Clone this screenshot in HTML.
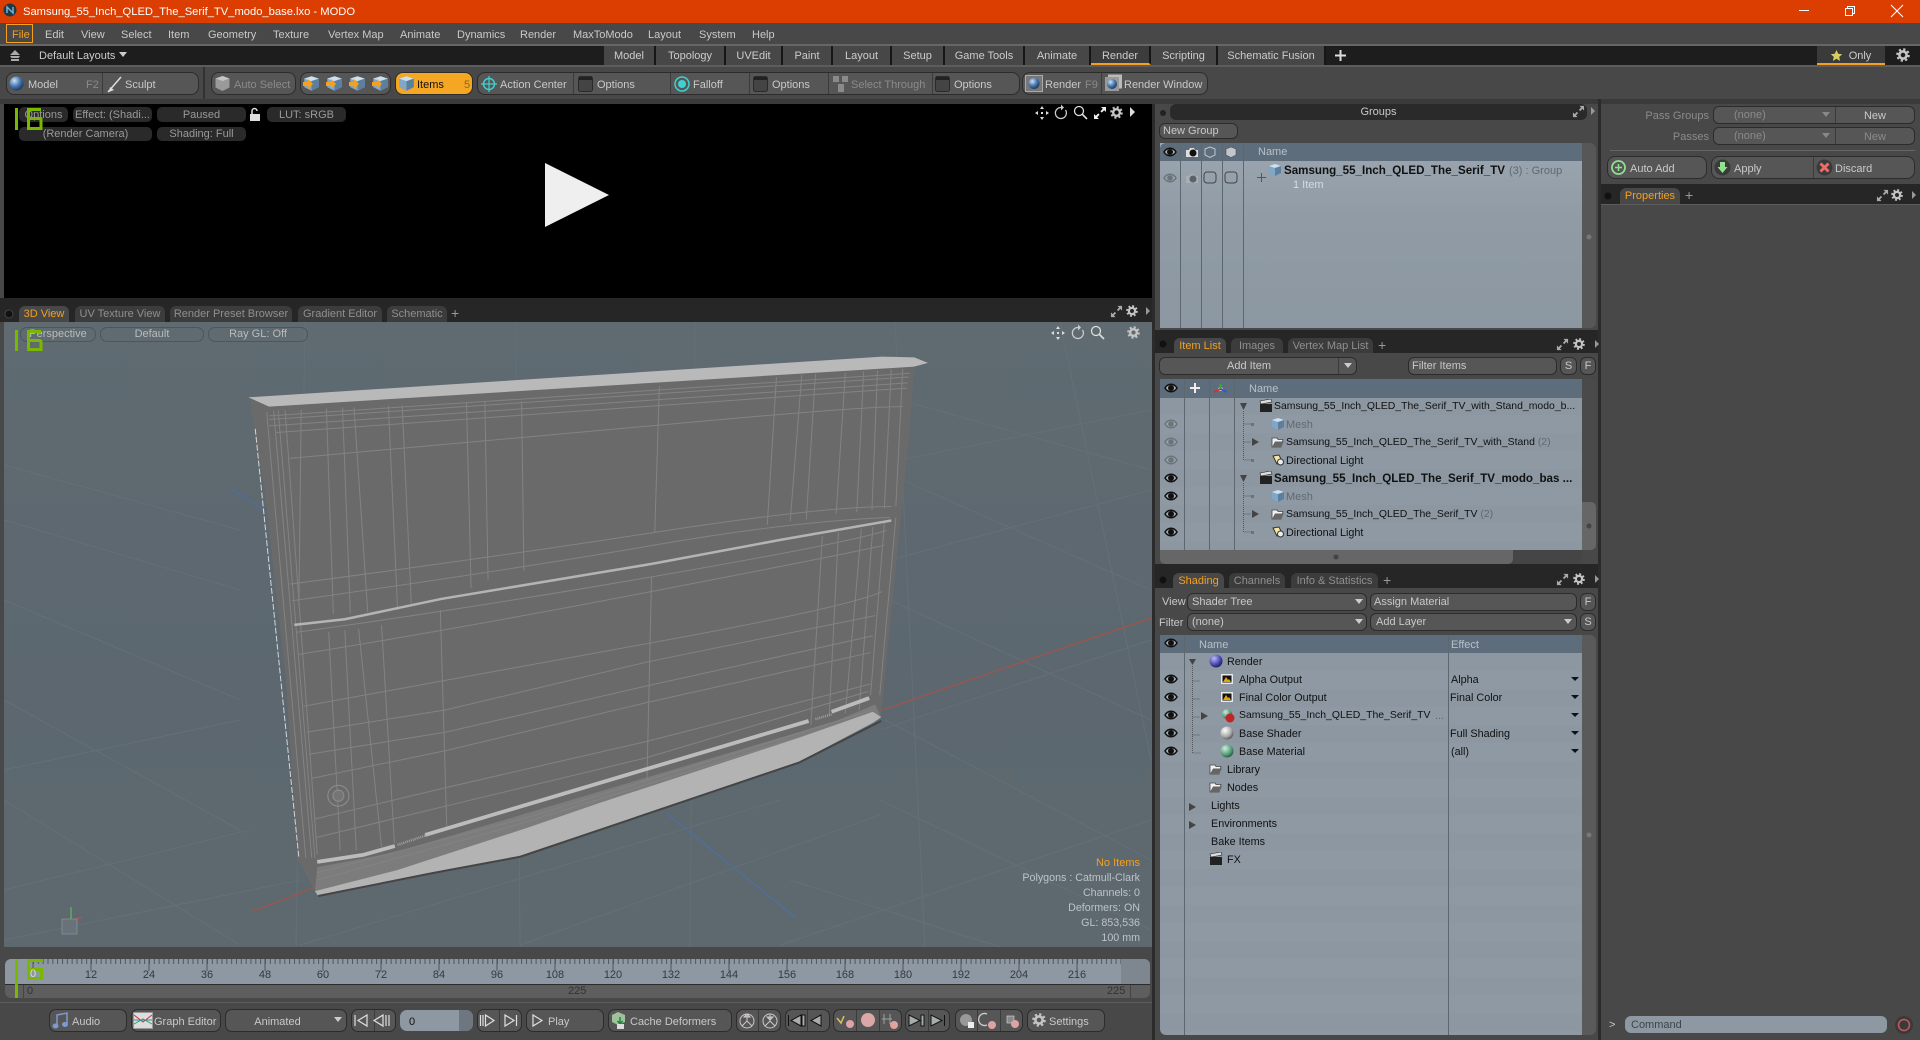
<!DOCTYPE html>
<html><head><meta charset="utf-8"><title>MODO</title>
<style>
html,body{margin:0;padding:0;width:1920px;height:1040px;overflow:hidden;background:#484848}
body{position:relative;font:11px/14px "Liberation Sans",sans-serif;color:#c9c9c9}
div,svg{position:absolute}
svg{overflow:visible}
.t{white-space:nowrap;padding-top:1px;box-sizing:border-box}
.c{text-align:center}
.r{text-align:right}
.d{color:#111;font-size:10.8px}
.n{font-size:10.45px}
.k{font-weight:bold;font-size:11.6px}
.g{color:#8b8b8b}
.o{color:#f5a020}
.m{color:#5f6973}
.b{background:#565656;border:1px solid #2c2c2c;border-radius:6px;box-sizing:border-box}
.p{background:#2a2a2a;border-radius:5px;box-sizing:border-box;color:#999;text-align:center}
.v{border:1px solid #4c565c;border-radius:7px;box-sizing:border-box;color:#bbb;text-align:center;line-height:12px;padding-top:0}
.tab{background:#3c3c3c;border-radius:6px 6px 0 0;color:#8f8f8f;text-align:center;box-sizing:border-box}
.on{background:#484848;color:#f5a020}
.lt{background:#474747;color:#ccc;text-align:center;line-height:19px;top:46px;height:19px;border-right:2px solid #161616;box-sizing:border-box;padding-top:1px}
.s{background:#2a2a2a}
.hd{background:#5e6d7c;color:#b7c0c8}
.ln{background:#5d6770;width:1px}
.dl{background:#3b3b3b;width:1px}
.h{font-size:10.7px;color:#bcc3c8}
</style></head><body>
<svg width="0" height="0" style="left:0;top:0">
<defs>
<symbol id="eye" viewBox="0 0 14 12"><path d="M1 6C4 1 10 1 13 6C10 11 4 11 1 6Z" fill="#aab0b5" stroke="#111" stroke-width="1.500"/><circle cx="7" cy="6" r="3" fill="#111"/></symbol>
<symbol id="eyeg" viewBox="0 0 14 12"><path d="M1 6C4 1 10 1 13 6C10 11 4 11 1 6Z" fill="#9ba3a9" stroke="#6c747b" stroke-width="1.400"/><circle cx="7" cy="6" r="2.800" fill="#6c747b"/></symbol>
<symbol id="cam" viewBox="0 0 14 12"><path d="M1 4h3l1-2h4l1 2h3v7H1z" fill="#ddd"/><circle cx="8" cy="7" r="3.500" fill="#111"/></symbol>
<symbol id="camg" viewBox="0 0 14 12"><path d="M1 4h3l1-2h4l1 2h3v7H1z" fill="#a8aeb3"/><circle cx="8" cy="7" r="3.500" fill="#59626a"/></symbol>
<symbol id="gear" viewBox="0 0 14 14"><circle cx="7" cy="7" r="3.600" fill="none" stroke="#c4c4c4" stroke-width="2.600"/><circle cx="7" cy="7" r="5.600" fill="none" stroke="#c4c4c4" stroke-width="2.400" stroke-dasharray="2.200 2.200"/></symbol>
<symbol id="exp" viewBox="0 0 14 14"><path d="M8 1h5v5l-1.800-1.800-2.400 2.400-1.400-1.400 2.400-2.400zM6 13H1V8l1.800 1.800 2.400-2.400 1.400 1.400-2.400 2.400z" fill="#aaa"/></symbol>
<symbol id="cube" viewBox="0 0 14 14"><path d="M7 1l6 2v7l-6 3-6-3V3z" fill="#7fa7c9"/><path d="M1 3l6 2 6-2-6-2z" fill="#cfdfeb"/><path d="M7 5v8l6-3V3z" fill="#5d7f9e"/></symbol>
<symbol id="fold" viewBox="0 0 14 14"><path d="M1 3h5l1 1.500h5L10 12H1z" fill="#f2f2f2" stroke="#444" stroke-width=".8"/><path d="M4 6.500h9L10 12H1z" fill="#666"/></symbol>
<symbol id="lite" viewBox="0 0 14 14"><path d="M2 3l6-1 3 6-5 3z" fill="#f3e7a5" stroke="#333"/><circle cx="9.500" cy="9" r="3" fill="#eee" stroke="#333"/></symbol>
<symbol id="clap" viewBox="0 0 14 14"><rect x="1" y="5" width="12" height="8" fill="#222"/><path d="M1 2l11-2 1 3-11 2z" fill="#ddd" stroke="#222" stroke-width=".6"/></symbol>
<symbol id="img" viewBox="0 0 14 14"><rect x="1" y="2" width="12" height="10" fill="#e8e8e8"/><rect x="2.500" y="3.500" width="9" height="7" fill="#111"/><path d="M3 10l3-5 2 3 1-1 2 3z" fill="#e0a800"/></symbol>
<radialGradient id="bs" cx=".35" cy=".3" r=".8"><stop offset="0" stop-color="#cfe2f5"/><stop offset=".5" stop-color="#4a7bb0"/><stop offset="1" stop-color="#13294a"/></radialGradient>
<radialGradient id="ps" cx=".35" cy=".3" r=".8"><stop offset="0" stop-color="#b9b9f0"/><stop offset=".6" stop-color="#4848b0"/><stop offset="1" stop-color="#14144a"/></radialGradient>
<radialGradient id="ws" cx=".35" cy=".3" r=".8"><stop offset="0" stop-color="#fff"/><stop offset=".6" stop-color="#aaa"/><stop offset="1" stop-color="#444"/></radialGradient>
<radialGradient id="gs" cx=".35" cy=".3" r=".8"><stop offset="0" stop-color="#cfeedd"/><stop offset=".6" stop-color="#55a07a"/><stop offset="1" stop-color="#1d4a33"/></radialGradient>
<pattern id="tk" x="33" y="0" width="4.833" height="40" patternUnits="userSpaceOnUse"><rect width="1" height="5" fill="#4f565d"/></pattern>
</defs></svg>

<!-- title -->
<div style="left:0;top:0;width:1920px;height:23px;background:#dc3d00"></div>
<svg style="left:3px;top:3px" width="14" height="14"><circle cx="7" cy="7" r="6.500" fill="#1e3a4a"/><path d="M4 10V4l6 6V4" fill="none" stroke="#6fb6d0" stroke-width="1.500"/></svg>
<div class="t" style="left:23px;top:4px;font-size:11.200px;color:#fff">Samsung_55_Inch_QLED_The_Serif_TV_modo_base.lxo - MODO</div>
<svg style="left:1795px;top:0" width="120" height="23"><path d="M4 10.500h10" stroke="#fff"/><path d="M50.500 8.500h7v7h-7zM52.500 8V6.500h7v7H58" fill="none" stroke="#fff"/><path d="M96 5l12 12M108 5L96 17" stroke="#fff" stroke-width="1.100"/></svg>

<!-- menu -->
<div style="left:0;top:44px;width:1920px;height:2px;background:#666"></div>
<div style="left:6px;top:24px;width:27px;height:19px;border:1px solid #f5a020;box-sizing:border-box"></div>
<div class="t o" style="left:12px;top:27px">File</div>
<div class="t" style="left:45px;top:27px">Edit</div>
<div class="t" style="left:81px;top:27px">View</div>
<div class="t" style="left:121px;top:27px">Select</div>
<div class="t" style="left:168px;top:27px">Item</div>
<div class="t" style="left:208px;top:27px">Geometry</div>
<div class="t" style="left:273px;top:27px">Texture</div>
<div class="t" style="left:328px;top:27px">Vertex Map</div>
<div class="t" style="left:400px;top:27px">Animate</div>
<div class="t" style="left:457px;top:27px">Dynamics</div>
<div class="t" style="left:520px;top:27px">Render</div>
<div class="t" style="left:573px;top:27px">MaxToModo</div>
<div class="t" style="left:648px;top:27px">Layout</div>
<div class="t" style="left:699px;top:27px">System</div>
<div class="t" style="left:752px;top:27px">Help</div>

<!-- layout tabs -->
<div style="left:0;top:46px;width:1920px;height:19px;background:#1d1d1d"></div>
<svg style="left:8px;top:48px" width="14" height="14"><path d="M7 2l5 5H2zM2 8h10l-1.500 2h-7zM3 11h8v2H3z" fill="#aaa"/></svg>
<div class="t" style="left:39px;top:48px;color:#ccc">Default Layouts</div>
<svg style="left:119px;top:52px" width="8" height="6"><path d="M0 0h8L4 5z" fill="#ccc"/></svg>
<div class="lt" style="left:604px;width:52px">Model</div>
<div class="lt" style="left:656px;width:70px">Topology</div>
<div class="lt" style="left:726px;width:57px">UVEdit</div>
<div class="lt" style="left:783px;width:50px">Paint</div>
<div class="lt" style="left:833px;width:59px">Layout</div>
<div class="lt" style="left:892px;width:53px">Setup</div>
<div class="lt" style="left:945px;width:80px">Game Tools</div>
<div class="lt" style="left:1025px;width:66px">Animate</div>
<div class="lt" style="left:1091px;width:60px;background:#3c3c3c;border-bottom:2px solid #f5a020">Render</div>
<div class="lt" style="left:1151px;width:67px">Scripting</div>
<div class="lt" style="left:1218px;width:108px">Schematic Fusion</div>
<svg style="left:1334px;top:49px" width="13" height="13"><path d="M6.500 1v11M1 6.500h11" stroke="#ddd" stroke-width="2"/></svg>
<div class="lt" style="left:1817px;width:68px;background:#3a3a3a;border-bottom:2px solid #f5a020;border-right:0;text-indent:18px">Only</div>
<svg style="left:1830px;top:49px" width="13" height="13"><path d="M6.500 1l1.700 3.800 4 .4-3 2.700.9 4.100-3.600-2.200L2.900 12l.9-4.100-3-2.700 4-.4z" fill="#d9cf60"/></svg>
<svg style="left:1896px;top:48px" width="14" height="14"><use href="#gear" width="14" height="14"/></svg>

<!-- toolbar -->
<div style="left:0;top:65px;width:1920px;height:2px;background:#5c5c5c"></div>
<div style="left:0;top:99px;width:1920px;height:5px;background:#3a3a3a"></div>
<div style="left:203px;top:67px;width:2px;height:32px;background:#333"></div>

<div class="b" style="left:6px;top:72px;width:193px;height:23px;border-radius:8px"></div>
<div class="dl" style="left:102px;top:73px;height:21px"></div>
<svg style="left:9px;top:76px" width="15" height="15"><circle cx="7.500" cy="7.500" r="7" fill="url(#bs)"/></svg>
<div class="t" style="left:28px;top:77px">Model</div>
<div class="t g" style="left:86px;top:77px">F2</div>
<svg style="left:106px;top:74px" width="18" height="20"><path d="M2 18L15 3" stroke="#ddd" stroke-width="1.500"/><path d="M4 13l4 3-5 2z" fill="#ddd"/></svg>
<div class="t" style="left:125px;top:77px">Sculpt</div>

<div class="b" style="left:211px;top:72px;width:85px;height:23px;border-radius:8px"></div>
<svg style="left:214px;top:75px" width="17" height="17"><path d="M8.500 1l7 2.500v9l-7 3.500-7-3.500v-9z" fill="#9a9a9a"/><path d="M1.500 3.500l7 2.500 7-2.500-7-2.500z" fill="#c4c4c4"/></svg>
<div class="t g" style="left:234px;top:77px">Auto Select</div>

<div class="b" style="left:300px;top:72px;width:91px;height:23px;border-radius:8px"></div>
<svg style="left:302px;top:75px" width="88" height="18"><use href="#cube" x="1" width="17" height="17"/><path d="M1 7h5V4l5 5-5 5v-3H1z" fill="#f5a020"/><use href="#cube" x="24" width="17" height="17"/><path d="M24 7h5V4l5 5-5 5v-3h-5z" fill="#f5a020"/><use href="#cube" x="47" width="17" height="17"/><path d="M47 7h5V4l5 5-5 5v-3h-5z" fill="#f5a020"/><use href="#cube" x="70" width="17" height="17"/><path d="M70 7h5V4l5 5-5 5v-3h-5z" fill="#f5a020"/></svg>

<div class="b" style="left:395px;top:72px;width:78px;height:23px;border-radius:8px;background:#f5a623"></div>
<svg style="left:398px;top:75px" width="17" height="17"><use href="#cube" width="17" height="17"/></svg>
<div class="t" style="left:417px;top:77px;color:#111">Items</div>
<div class="t" style="left:464px;top:77px;color:#8c6a20">5</div>

<div class="b" style="left:477px;top:72px;width:543px;height:23px;border-radius:8px"></div>
<div class="dl" style="left:573px;top:73px;height:21px"></div><div class="dl" style="left:670px;top:73px;height:21px"></div><div class="dl" style="left:749px;top:73px;height:21px"></div><div class="dl" style="left:828px;top:73px;height:21px"></div><div class="dl" style="left:932px;top:73px;height:21px"></div>
<svg style="left:481px;top:76px" width="16" height="16"><circle cx="8" cy="8" r="5.500" fill="none" stroke="#3fd0d0" stroke-width="1.500"/><path d="M8 0v16M0 8h16" stroke="#3fd0d0" stroke-width="1.200"/></svg>
<div class="t" style="left:500px;top:77px">Action Center</div>
<svg style="left:578px;top:76px" width="15" height="16"><rect x=".5" y=".5" width="14" height="15" rx="2" fill="#444" stroke="#2a2a2a"/><rect x="1" y="1" width="13" height="3" fill="#222"/></svg>
<div class="t" style="left:597px;top:77px">Options</div>
<svg style="left:674px;top:76px" width="16" height="16"><circle cx="8" cy="8" r="7" fill="none" stroke="#3fd0d0" stroke-width="1.500"/><circle cx="8" cy="8" r="4" fill="#3fd0d0"/></svg>
<div class="t" style="left:693px;top:77px">Falloff</div>
<svg style="left:753px;top:76px" width="15" height="16"><rect x=".5" y=".5" width="14" height="15" rx="2" fill="#444" stroke="#2a2a2a"/><rect x="1" y="1" width="13" height="3" fill="#222"/></svg>
<div class="t" style="left:772px;top:77px">Options</div>
<svg style="left:832px;top:75px" width="17" height="18"><path d="M1 1h6v6H1zM10 1h6v6h-6zM6 9h6v8H6z" fill="#8a8a8a"/></svg>
<div class="t g" style="left:851px;top:77px">Select Through</div>
<svg style="left:935px;top:76px" width="15" height="16"><rect x=".5" y=".5" width="14" height="15" rx="2" fill="#444" stroke="#2a2a2a"/><rect x="1" y="1" width="13" height="3" fill="#222"/></svg>
<div class="t" style="left:954px;top:77px">Options</div>

<div class="b" style="left:1022px;top:72px;width:186px;height:23px;border-radius:8px"></div>
<div class="dl" style="left:1101px;top:73px;height:21px"></div>
<svg style="left:1025px;top:75px" width="18" height="17"><rect x=".5" y=".5" width="17" height="16" fill="#777" stroke="#aaa"/><circle cx="9" cy="8.500" r="5.500" fill="url(#bs)"/></svg>
<div class="t" style="left:1045px;top:77px">Render</div>
<div class="t g" style="left:1085px;top:77px">F9</div>
<svg style="left:1103px;top:74px" width="20" height="19"><rect x="5" y=".5" width="14" height="14" fill="#bbb"/><rect x="2" y="3" width="14" height="14" fill="#999"/><circle cx="9" cy="10" r="5" fill="url(#bs)"/></svg>
<div class="t" style="left:1124px;top:77px">Render Window</div>

<!-- render preview -->
<div style="left:4px;top:104px;width:1148px;height:194px;background:#000"></div>
<div class="p t" style="left:19px;top:107px;width:49px;height:15px">Options</div>
<div class="p t" style="left:73px;top:107px;width:79px;height:15px">Effect: (Shadi...</div>
<div class="p t" style="left:157px;top:107px;width:89px;height:15px">Paused</div>
<svg style="left:249px;top:107px" width="12" height="15"><rect x="1" y="7" width="10" height="7" fill="#ddd"/><path d="M3 7V4a2.500 2.500 0 0 1 5 0" fill="none" stroke="#ddd" stroke-width="1.500"/></svg>
<div class="p t" style="left:267px;top:107px;width:79px;height:15px">LUT: sRGB</div>
<div class="p t" style="left:19px;top:127px;width:133px;height:14px;line-height:13px">(Render Camera)</div>
<div class="p t" style="left:157px;top:127px;width:89px;height:14px;line-height:13px">Shading: Full</div>
<svg style="left:15px;top:108px" width="28" height="22"><path d="M1.500 0v22" stroke="#7ab800" stroke-width="3"/><path d="M14 1.500h12M13.500 0v22M13 20.500h13M26 10v12M13 10.500h13" stroke="#7ab800" stroke-width="3" fill="none"/></svg>
<svg style="left:1033px;top:104px" width="110" height="18">
<path d="M9 2l2 3H7zM9 16l2-3H7zM2 9l3-2v4zM16 9l-3-2v4zM8 8h2v2H8z" fill="#ddd"/>
<path d="M28 3.500a5.500 5.500 0 1 0 4.500 2.500" fill="none" stroke="#ccc" stroke-width="1.300"/><path d="M28 0.500l3 3-3 3z" fill="#ccc"/>
<circle cx="46" cy="7" r="4.500" fill="none" stroke="#ddd" stroke-width="1.300"/><path d="M49 10l5 5" stroke="#ddd" stroke-width="1.600"/>
<use href="#exp" x="60" y="2" width="14" height="14" style="filter:brightness(1.4)"/><use href="#gear" x="77" y="2" width="13" height="13"/>
<path d="M97 3l5 5-5 5z" fill="#ddd"/></svg>
<svg style="left:545px;top:163px" width="64" height="64"><path d="M0 0L64 32L0 64Z" fill="#efefef"/></svg>

<!-- 3D viewport tabs -->
<div style="left:0;top:298px;width:1155px;height:24px;background:#262626"></div>
<svg style="left:4px;top:309px" width="10" height="10"><circle cx="5" cy="5" r="4" fill="#111" stroke="#444"/></svg>
<div class="tab on t" style="left:19px;top:306px;width:50px;height:16px">3D View</div>
<div class="tab t" style="left:75px;top:306px;width:90px;height:16px">UV Texture View</div>
<div class="tab t" style="left:170px;top:306px;width:122px;height:16px">Render Preset Browser</div>
<div class="tab t" style="left:298px;top:306px;width:84px;height:16px">Gradient Editor</div>
<div class="tab t" style="left:387px;top:306px;width:60px;height:16px">Schematic</div>
<div class="t" style="left:451px;top:305px;font-size:14px;color:#999">+</div>
<svg style="left:1110px;top:305px" width="40" height="14"><use href="#exp" width="13" height="13"/><use href="#gear" x="16" width="12" height="12"/><path d="M36 2l4 4-4 4z" fill="#999"/></svg>

<!-- viewport -->
<div style="left:4px;top:322px;width:1148px;height:625px;background:linear-gradient(#5f6a71,#5c676f 60%,#5e696f)"></div>
<svg style="left:0;top:0" width="1920" height="1040">
<g stroke="#646f77" stroke-width="1" fill="none">
<path d="M305 322L296 950M516 322L520 950M695 322L690 950M895 322L925 950M1060 322L1151 760"/>
<path d="M4 600L240 700M4 700L240 830M4 800L240 945M4 520L240 590M4 465L240 530M880 470L1151 590M890 600L1151 720M885 720L1151 860M790 880L1000 947M900 400L1151 470M880 800L1151 930"/>
<path d="M4 890L250 830M4 940L300 880M300 945L780 800M520 945L880 815M780 945L1151 820M880 730L1151 640M890 560L1151 490M900 460L1151 410M4 770L240 720"/>
</g>
<path d="M251 912L313 888M882 710L1151 618" stroke="#a5524a" stroke-width="1.200"/>
<path d="M230 488L264 510M666 813L795 917" stroke="#4d6fa0" stroke-width="1.200"/>
<g transform="translate(230 340) scale(.4592 .3699)">
<path d="M42 160L85 178L1490 72L1480 250L1420 985L1418 1020L1240 1140L632 1397L442 1441L192 1503L181 1481L148 1405L120 900L75 400L50 220Z" fill="#6a6a6a"/>
<path d="M190 1425L360 1385L1320 1030L1405 985L1418 1020L1240 1090L806 1270L364 1450L185 1490Z" fill="#7c7c7c"/>
<g fill="none" stroke="#838383" stroke-width="1">
<path vector-effect="non-scaling-stroke" d="M935 125L925 520M918 640L908 1190M1190 100L1170 500M1245 95L1220 490M1275 92L1255 485M1340 88L1320 470M1380 85L1365 465M1410 82L1398 460M1440 80L1425 455M1465 78L1450 450"/>
<path vector-effect="non-scaling-stroke" d="M1290 530L1265 1040M1375 510L1340 1010M1400 505L1370 1000M1425 495L1395 960M80 195L165 1400M95 190L178 1400M105 190L185 1400M120 190L190 1390"/>
<path vector-effect="non-scaling-stroke" d="M155 188L150 720M210 185L225 740M245 183L262 738M270 182L300 735M345 178L365 730M375 176L395 720M515 170L525 670M555 168L562 650M635 165L640 625"/>
<path vector-effect="non-scaling-stroke" d="M215 790L240 1380M250 785L275 1380M280 780L330 1370M330 770L358 1360M458 730L472 1315M1325 520L1305 1015M1450 480L1415 960"/>
<path vector-effect="non-scaling-stroke" d="M85 205L1480 90M85 215L1478 100M85 232L1476 116M100 250L1475 130M130 320Q500 280 935 230T1465 180M130 660Q560 590 925 520T1440 450M135 705Q620 620 922 555T1437 480"/>
<path vector-effect="non-scaling-stroke" d="M145 790Q500 730 920 640T1430 515M150 850Q500 780 918 680T1425 555M160 990Q470 920 912 820T1420 680M168 1060L470 1000L910 870L1405 745M172 1120L470 1060L908 935L1400 800M178 1185L470 1110L908 980L1395 845M185 1295L470 1210L908 1085L1395 930M188 1345L470 1260L905 1130L1390 950M190 1440L650 1290L1400 1000M190 1460L600 1320L1400 1012"/>
</g>
<path d="M185 1490L364 1433L647 1319L806 1251L1240 1075L1400 1005L1418 1020L1400 1035L1240 1140L632 1397L442 1441L192 1503Z" fill="#b3b3b3"/>
<path d="M40 155L1420 45L1490 47L1520 62L1490 72L85 180Z" fill="#b9b9b9"/>
<path d="M140 770L250 755L460 700L920 605L1200 540L1440 488" fill="none" stroke="#b4b4b4" stroke-width="2.500" vector-effect="non-scaling-stroke"/>
<path d="M190 1411L290 1392L359 1368M425 1338L806 1197L1260 1030M1310 1005L1392 968" fill="none" stroke="#bcbcbc" stroke-width="3.800" vector-effect="non-scaling-stroke"/>
<path d="M365 1365L425 1340M1275 1025L1310 1012" fill="none" stroke="#a0a0a0" stroke-width="2.500" stroke-dasharray="1 1" vector-effect="non-scaling-stroke"/>
<path d="M192 1503L442 1441L632 1397L1240 1142L1418 1030" fill="none" stroke="#454545" stroke-width="2" vector-effect="non-scaling-stroke"/>
<path d="M55 240L150 1400" fill="none" stroke="#d6d6d6" stroke-width="1" stroke-dasharray="6 2" vector-effect="non-scaling-stroke"/>
<ellipse cx="236" cy="1232" rx="23" ry="28" fill="none" stroke="#8e8e8e" vector-effect="non-scaling-stroke"/>
<ellipse cx="236" cy="1232" rx="12" ry="15" fill="#757575" stroke="#8e8e8e" vector-effect="non-scaling-stroke"/>
</g>
<g transform="translate(62 905)" fill="none" stroke-width="1.400"><path d="M9 16V2" stroke="#5cb35c"/><path d="M9 16L20 12" stroke="#c24a4a"/><path d="M9 16L2 30" stroke="#5878b8"/><path d="M0 14h15v15H0z" fill="#6a7279" stroke="#8a8f93" stroke-width=".8"/></g>
</svg>
<div class="v t" style="left:20px;top:327px;width:76px;height:15px">Perspective</div>
<div class="v t" style="left:100px;top:327px;width:104px;height:15px">Default</div>
<div class="v t" style="left:208px;top:327px;width:100px;height:15px">Ray GL: Off</div>
<svg style="left:15px;top:330px" width="28" height="21"><path d="M1.500 0v21" stroke="#7ab800" stroke-width="3"/><path d="M14 1.500h12M13.500 0v21M13 19.500h13M26 10v11M13 10.500h13" stroke="#7ab800" stroke-width="3" fill="none"/></svg>
<svg style="left:1049px;top:324px" width="100" height="18"><path d="M9 2l2 3H7zM9 16l2-3H7zM2 9l3-2v4zM16 9l-3-2v4zM8 8h2v2H8z" fill="#ddd"/><path d="M29 3.500a5.500 5.500 0 1 0 4.500 2.500" fill="none" stroke="#ccc" stroke-width="1.300"/><path d="M29 .5l3 3-3 3z" fill="#ccc"/><circle cx="47" cy="7" r="4.500" fill="none" stroke="#ddd" stroke-width="1.300"/><path d="M50 10l5 5" stroke="#ddd" stroke-width="1.600"/><use href="#gear" x="78" y="2" width="13" height="13"/></svg>
<div class="t r o" style="left:1040px;top:855px;width:100px">No Items</div>
<div class="t r h" style="left:940px;top:870px;width:200px">Polygons : Catmull-Clark</div>
<div class="t r h" style="left:940px;top:885px;width:200px">Channels: 0</div>
<div class="t r h" style="left:940px;top:900px;width:200px">Deformers: ON</div>
<div class="t r h" style="left:940px;top:915px;width:200px">GL: 853,536</div>
<div class="t r h" style="left:940px;top:930px;width:200px">100 mm</div>

<!-- timeline -->
<div style="left:0;top:947px;width:1155px;height:12px;background:#484848"></div>
<div style="left:5px;top:959px;width:1145px;height:25px;background:#8e98a2;border-radius:6px 6px 0 0;overflow:hidden"><div style="left:1116px;top:0;width:29px;height:25px;background:#7e8790"></div></div>
<div style="left:5px;top:984px;width:1145px;height:14px;background:#5e5e5e;border-radius:0 0 6px 6px;border-top:1px solid #2b2b2b;box-sizing:border-box"></div>
<svg style="left:0;top:959px" width="1155" height="25"><rect x="33" y="0" width="1088" height="5" fill="url(#tk)"/><path d="M33 0v12M91 0v12M149 0v12M207 0v12M265 0v12M323 0v12M381 0v12M439 0v12M497 0v12M555 0v12M613 0v12M671 0v12M729 0v12M787 0v12M845 0v12M903 0v12M961 0v12M1019 0v12M1077 0v12" stroke="#4f565d"/></svg>
<div class="t c" style="left:76px;top:967px;width:30px;color:#33393f">12</div><div class="t c" style="left:134px;top:967px;width:30px;color:#33393f">24</div><div class="t c" style="left:192px;top:967px;width:30px;color:#33393f">36</div><div class="t c" style="left:250px;top:967px;width:30px;color:#33393f">48</div><div class="t c" style="left:308px;top:967px;width:30px;color:#33393f">60</div><div class="t c" style="left:366px;top:967px;width:30px;color:#33393f">72</div><div class="t c" style="left:424px;top:967px;width:30px;color:#33393f">84</div><div class="t c" style="left:482px;top:967px;width:30px;color:#33393f">96</div><div class="t c" style="left:540px;top:967px;width:30px;color:#33393f">108</div><div class="t c" style="left:598px;top:967px;width:30px;color:#33393f">120</div><div class="t c" style="left:656px;top:967px;width:30px;color:#33393f">132</div><div class="t c" style="left:714px;top:967px;width:30px;color:#33393f">144</div><div class="t c" style="left:772px;top:967px;width:30px;color:#33393f">156</div><div class="t c" style="left:830px;top:967px;width:30px;color:#33393f">168</div><div class="t c" style="left:888px;top:967px;width:30px;color:#33393f">180</div><div class="t c" style="left:946px;top:967px;width:30px;color:#33393f">192</div><div class="t c" style="left:1004px;top:967px;width:30px;color:#33393f">204</div><div class="t c" style="left:1062px;top:967px;width:30px;color:#33393f">216</div>
<div class="t" style="left:27px;top:983px;color:#333">0</div>
<div class="t" style="left:568px;top:983px;color:#333">225</div>
<div class="t" style="left:1107px;top:983px;color:#333">225</div>
<div style="left:1130px;top:985px;width:1px;height:13px;background:#444"></div>
<div style="left:23px;top:985px;width:1px;height:13px;background:#444"></div>
<svg style="left:15px;top:959px" width="28" height="39"><path d="M1.500 0v39" stroke="#7ab800" stroke-width="3"/><path d="M14 1.500h14M13.500 0v21M13 19.500h15M26.500 10v11M13 10.500h15" stroke="#7ab800" stroke-width="3" fill="none"/></svg>
<div class="t" style="left:30px;top:966px;color:#ddd">0</div>
<div style="left:0;top:1002px;width:1155px;height:1px;background:#5c5c5c"></div>

<!-- bottom toolbar -->
<div class="b" style="left:49px;top:1009px;width:78px;height:23px;border-radius:7px"></div>
<svg style="left:52px;top:1012px" width="18" height="17"><path d="M5 14V3l10-2v11" fill="none" stroke="#7d9ad0" stroke-width="1.500"/><ellipse cx="3.500" cy="14" rx="3" ry="2.500" fill="#7d9ad0"/><ellipse cx="13" cy="12.500" rx="3" ry="2.500" fill="#7d9ad0"/></svg>
<div class="t" style="left:72px;top:1014px">Audio</div>
<div class="b" style="left:131px;top:1009px;width:90px;height:23px;border-radius:7px"></div>
<svg style="left:133px;top:1012px" width="20" height="17"><rect x=".5" y=".5" width="19" height="16" fill="#ddd" stroke="#999"/><path d="M1 3l9 7 9-7" fill="none" stroke="#c33"/><path d="M1 12l9-5 9 5" fill="none" stroke="#3a3"/><path d="M1 8h18" stroke="#38c"/></svg>
<div class="t" style="left:154px;top:1014px">Graph Editor</div>
<div class="b" style="left:225px;top:1009px;width:122px;height:23px;border-radius:7px"></div>
<div class="t c" style="left:225px;top:1014px;width:105px">Animated</div>
<svg style="left:334px;top:1017px" width="8" height="6"><path d="M0 0h8L4 5z" fill="#ccc"/></svg>
<div class="b" style="left:351px;top:1009px;width:45px;height:23px;border-radius:7px"></div>
<div class="dl" style="left:374px;top:1010px;height:21px"></div>
<svg style="left:353px;top:1014px" width="42" height="13" fill="none" stroke="#e0e0e0" stroke-width="1.200"><path d="M2 1v11M14 1L5 6.500 14 12zM30 1L21 6.500 30 12zM33 1v11M36 1v11"/></svg>
<div style="left:400px;top:1010px;width:73px;height:21px;border-radius:7px;background:#8e98a2"></div>
<div style="left:459px;top:1010px;width:14px;height:21px;border-radius:0 7px 7px 0;background:#6e7780"></div>
<div class="t" style="left:409px;top:1014px;color:#111">0</div>
<div class="b" style="left:477px;top:1009px;width:45px;height:23px;border-radius:7px"></div>
<div class="dl" style="left:499px;top:1010px;height:21px"></div>
<svg style="left:479px;top:1014px" width="42" height="13" fill="none" stroke="#e0e0e0" stroke-width="1.200"><path d="M1.500 1v11M4 1v11M6.500 1L15 6.500 6.500 12zM26 1L35 6.500 26 12zM37.500 1v11"/></svg>
<div class="b" style="left:526px;top:1009px;width:78px;height:23px;border-radius:7px"></div>
<svg style="left:532px;top:1014px" width="12" height="13"><path d="M1 1L10 6.500 1 12z" fill="none" stroke="#e0e0e0" stroke-width="1.200"/></svg>
<div class="t" style="left:548px;top:1014px">Play</div>
<div class="b" style="left:608px;top:1009px;width:124px;height:23px;border-radius:7px"></div>
<svg style="left:611px;top:1011px" width="16" height="19"><path d="M7 1l7 3v7l-7 3-6-3V4z" fill="#9fc29a"/><path d="M9 6v6M6.500 10l2.500 3 2.500-3" stroke="#1a8a3a" fill="none" stroke-width="1.500"/><rect x="6" y="13" width="7" height="5" fill="#ddd"/></svg>
<div class="t" style="left:630px;top:1014px">Cache Deformers</div>
<div class="b" style="left:736px;top:1009px;width:45px;height:23px;border-radius:7px"></div>
<div class="dl" style="left:758px;top:1010px;height:21px"></div>
<svg style="left:738px;top:1012px" width="42" height="17" fill="none" stroke="#c9c9c9"><circle cx="9" cy="9" r="7"/><circle cx="32" cy="9" r="7"/><path d="M9 9L4 14M9 9l5 5M9 9V2M32 9l-5 5M32 9l5 5M32 9V2"/><path d="M9 2l-3 3h6z" fill="#dd9a9a"/><path d="M32 8l-3-3h6z" fill="#9ad09a"/></svg>
<div class="b" style="left:785px;top:1009px;width:45px;height:23px;border-radius:7px"></div>
<div class="dl" style="left:807px;top:1010px;height:21px"></div>
<svg style="left:787px;top:1014px" width="42" height="13" fill="#a7ada7" stroke="#111"><path d="M1.500 1v11M14 1v11L4 6.500zM15 1h3v11h-3zM34 1v11L24 6.500z"/></svg>
<div class="b" style="left:833px;top:1009px;width:69px;height:23px;border-radius:7px"></div>
<div class="dl" style="left:856px;top:1010px;height:21px"></div><div class="dl" style="left:879px;top:1010px;height:21px"></div>
<svg style="left:835px;top:1011px" width="66" height="19"><path d="M2 7l4 5 3-7" fill="none" stroke="#d8c060" stroke-width="1.500"/><circle cx="15" cy="13" r="4" fill="#dfa3a3"/><circle cx="33" cy="9" r="7" fill="#dba8a8"/><path d="M49 3v10M55 3v10M47 8h10" stroke="#a0a0a0"/><circle cx="59" cy="14" r="4" fill="#dfa3a3"/></svg>
<div class="b" style="left:905px;top:1009px;width:45px;height:23px;border-radius:7px"></div>
<div class="dl" style="left:928px;top:1010px;height:21px"></div>
<svg style="left:907px;top:1014px" width="42" height="13" fill="#a7ada7" stroke="#111"><path d="M2 1v11L13 6.500zM14 1h3v11h-3zM24 1v11L35 6.500zM37.500 1v11"/></svg>
<div class="b" style="left:955px;top:1009px;width:68px;height:23px;border-radius:7px"></div>
<div class="dl" style="left:977px;top:1010px;height:21px"></div><div class="dl" style="left:1000px;top:1010px;height:21px"></div>
<svg style="left:957px;top:1011px" width="66" height="19"><circle cx="9" cy="9" r="6" fill="#999"/><rect x="11" y="11" width="6" height="6" fill="#eee"/><path d="M30 3a6 6 0 1 0 0 11" fill="none" stroke="#ccc" stroke-width="1.300"/><circle cx="35" cy="14" r="4" fill="#dfa3a3"/><rect x="50" y="5" width="7" height="7" fill="#888" stroke="#ddd" stroke-width=".6"/><circle cx="58" cy="13" r="4" fill="#dfa3a3"/></svg>
<div class="b" style="left:1027px;top:1009px;width:78px;height:23px;border-radius:7px"></div>
<svg style="left:1032px;top:1013px" width="14" height="14"><use href="#gear" width="14" height="14"/></svg>
<div class="t" style="left:1049px;top:1014px">Settings</div>

<!-- separators -->
<div style="left:1152px;top:104px;width:3px;height:936px;background:#2b2b2b"></div>
<div style="left:1598px;top:99px;width:3px;height:941px;background:#2b2b2b"></div>

<!-- Groups -->
<div style="left:1155px;top:104px;width:443px;height:226px;background:#484848"></div>
<svg style="left:1159px;top:109px" width="8" height="8"><circle cx="4" cy="4" r="3" fill="#222"/></svg>
<div class="t c s" style="left:1170px;top:104px;width:417px;height:16px;border-radius:6px;line-height:15px">Groups</div>
<svg style="left:1572px;top:105px" width="24" height="14"><use href="#exp" width="13" height="13"/><path d="M19 2l4 4-4 4z" fill="#999"/></svg>
<div class="b t" style="left:1159px;top:123px;width:79px;height:16px;padding-left:3px;line-height:13px">New Group</div>
<div style="left:1160px;top:143px;width:422px;height:185px;background:linear-gradient(#9ba6b0,#909ba5 40%,#8c97a1)"></div>
<div class="hd" style="left:1160px;top:143px;width:422px;height:18px;border-radius:6px 0 0 0"></div>
<div class="t" style="left:1258px;top:144px;color:#b7c0c8">Name</div>
<div style="left:1582px;top:143px;width:14px;height:185px;background:#575757;border-radius:0 6px 6px 0"></div>
<svg style="left:1586px;top:234px" width="6" height="6"><circle cx="3" cy="3" r="2.500" fill="#777"/></svg>
<div class="ln" style="left:1180px;top:143px;height:185px"></div><div class="ln" style="left:1201px;top:143px;height:185px"></div><div class="ln" style="left:1222px;top:143px;height:185px"></div><div class="ln" style="left:1243px;top:143px;height:185px"></div>
<svg style="left:1163px;top:146px" width="80" height="40"><use href="#eye" y="0" width="14" height="12"/><use href="#cam" x="22" y="0" width="14" height="12"/><path d="M47 1l5 2v6l-5 2.500-5-2.500V3z" fill="none" stroke="#c0c6cb"/><path d="M68 1l5 2v6l-5 2.500-5-2.500V3z" fill="#c0c6cb" stroke="#444" stroke-width=".5"/><use href="#eyeg" y="26" width="14" height="12"/><use href="#camg" x="22" y="26" width="14" height="12"/><rect x="41" y="26" width="12" height="11" rx="3" fill="none" stroke="#444"/><rect x="62" y="26" width="12" height="11" rx="3" fill="none" stroke="#444"/></svg>
<svg style="left:1256px;top:172px" width="11" height="11"><path d="M5.500 1v9M1 5.500h9" stroke="#555"/></svg>
<svg style="left:1268px;top:163px" width="14" height="14"><use href="#cube" width="14" height="14"/></svg>
<div class="t k" style="left:1284px;top:163px;color:#111">Samsung_55_Inch_QLED_The_Serif_TV</div>
<div class="t m" style="left:1509px;top:163px">(3) : Group</div>
<div class="t" style="left:1293px;top:177px;color:#d6dbe0">1 Item</div>

<!-- Item List -->
<div style="left:1155px;top:330px;width:443px;height:23px;background:#262626"></div>
<svg style="left:1159px;top:340px" width="8" height="8"><circle cx="4" cy="4" r="3.500" fill="#111"/></svg>
<div class="tab on t" style="left:1174px;top:338px;width:52px;height:15px;line-height:15px">Item List</div>
<div class="tab t" style="left:1231px;top:338px;width:52px;height:15px;line-height:15px">Images</div>
<div class="tab t" style="left:1288px;top:338px;width:85px;height:15px;line-height:15px">Vertex Map List</div>
<div class="t" style="left:1378px;top:337px;font-size:14px;color:#999">+</div>
<svg style="left:1556px;top:338px" width="44" height="14"><use href="#exp" width="13" height="13"/><use href="#gear" x="17" width="12" height="12"/><path d="M39 2l4 4-4 4z" fill="#999"/></svg>
<div class="b t c" style="left:1159px;top:357px;width:198px;height:18px;line-height:15px;padding-right:18px">Add Item</div>
<div class="dl" style="left:1338px;top:358px;height:16px"></div>
<svg style="left:1344px;top:363px" width="8" height="6"><path d="M0 0h8L4 5z" fill="#ccc"/></svg>
<div class="b t" style="left:1408px;top:357px;width:149px;height:18px;line-height:15px;padding-left:3px">Filter Items</div>
<div class="b t c" style="left:1560px;top:357px;width:17px;height:18px;line-height:15px">S</div>
<div class="b t c" style="left:1580px;top:357px;width:16px;height:18px;line-height:15px">F</div>
<div style="left:1160px;top:379px;width:422px;height:171px;background:repeating-linear-gradient(#8e99a3 0,#8e99a3 18px,#8c97a1 18px,#8c97a1 36px)"></div>
<div class="hd" style="left:1160px;top:379px;width:422px;height:19px"></div>
<div class="ln" style="left:1184px;top:379px;height:171px"></div><div class="ln" style="left:1209px;top:379px;height:171px"></div><div class="ln" style="left:1234px;top:379px;height:171px"></div>
<div class="t" style="left:1249px;top:381px;color:#b7c0c8">Name</div>
<svg style="left:1164px;top:382px" width="70" height="160"><use href="#eye" y="0" width="14" height="12"/><path d="M31 1v10M26 6h10" stroke="#eee" stroke-width="2"/><path d="M52 9l4.500-5 4.500 5z" fill="#ddd"/><path d="M56.500 2v5" stroke="#3a3" stroke-width="2"/><path d="M56.500 7L50 10" stroke="#c33" stroke-width="2"/><path d="M56.500 7L63 10" stroke="#35c" stroke-width="2"/><use href="#eyeg" y="36" width="14" height="12"/><use href="#eyeg" y="54" width="14" height="12"/><use href="#eyeg" y="72" width="14" height="12"/><use href="#eye" y="90" width="14" height="12"/><use href="#eye" y="108" width="14" height="12"/><use href="#eye" y="126" width="14" height="12"/><use href="#eye" y="144" width="14" height="12"/></svg>
<svg style="left:1238px;top:398px" width="40" height="150"><path d="M2 5h7L5.500 12zM2 77h7L5.500 84zM14 40l7 4-7 4zM14 112l7 4-7 4z" fill="#444"/><g stroke="#555" stroke-dasharray="1 1" fill="none"><path d="M5.500 13v49h8M5.500 26h8M5.500 44h8M5.500 85v49h8M5.500 98h8M5.500 116h8"/></g><path d="M13 25h3v3h-3zM13 61h3v3h-3zM13 97h3v3h-3zM13 133h3v3h-3z" fill="#6c747b"/></svg>
<svg style="left:1259px;top:399px" width="36" height="150"><use href="#clap" width="14" height="14"/><use href="#clap" y="72" width="14" height="14"/><use href="#cube" x="12" y="18" width="14" height="14"/><use href="#fold" x="12" y="36" width="14" height="14"/><use href="#lite" x="12" y="54" width="14" height="14"/><use href="#cube" x="12" y="90" width="14" height="14"/><use href="#fold" x="12" y="108" width="14" height="14"/><use href="#lite" x="12" y="126" width="14" height="14"/></svg>
<div class="t d n" style="left:1274px;top:399px">Samsung_55_Inch_QLED_The_Serif_TV_with_Stand_modo_b...</div>
<div class="t m" style="left:1286px;top:417px">Mesh</div>
<div class="t d n" style="left:1286px;top:435px">Samsung_55_Inch_QLED_The_Serif_TV_with_Stand <span class="m">(2)</span></div>
<div class="t d" style="left:1286px;top:453px">Directional Light</div>
<div class="t k" style="left:1274px;top:471px;color:#111">Samsung_55_Inch_QLED_The_Serif_TV_modo_bas ...</div>
<div class="t m" style="left:1286px;top:489px">Mesh</div>
<div class="t d n" style="left:1286px;top:507px">Samsung_55_Inch_QLED_The_Serif_TV <span class="m">(2)</span></div>
<div class="t d" style="left:1286px;top:525px">Directional Light</div>
<div style="left:1582px;top:379px;width:14px;height:171px;background:#4a4a4a;border-radius:0 6px 6px 0"></div>
<div style="left:1582px;top:502px;width:14px;height:48px;background:#666;border-radius:0 5px 5px 0"></div>
<div style="left:1160px;top:550px;width:422px;height:14px;background:#454545;border-radius:0 0 6px 6px"></div>
<div style="left:1160px;top:550px;width:353px;height:14px;background:#666;border-radius:0 0 5px 5px"></div>
<svg style="left:1333px;top:554px" width="6" height="6"><circle cx="3" cy="3" r="2.500" fill="#444"/></svg>
<svg style="left:1586px;top:523px" width="6" height="6"><circle cx="3" cy="3" r="2.500" fill="#444"/></svg>

<!-- Shading -->
<div style="left:1155px;top:564px;width:443px;height:24px;background:#262626"></div>
<svg style="left:1159px;top:576px" width="8" height="8"><circle cx="4" cy="4" r="3.500" fill="#111"/></svg>
<div class="tab on t" style="left:1173px;top:573px;width:51px;height:15px;line-height:15px">Shading</div>
<div class="tab t" style="left:1229px;top:573px;width:56px;height:15px;line-height:15px">Channels</div>
<div class="tab t" style="left:1291px;top:573px;width:87px;height:15px;line-height:15px">Info &amp; Statistics</div>
<div class="t" style="left:1383px;top:572px;font-size:14px;color:#999">+</div>
<svg style="left:1556px;top:573px" width="44" height="14"><use href="#exp" width="13" height="13"/><use href="#gear" x="17" width="12" height="12"/><path d="M39 2l4 4-4 4z" fill="#999"/></svg>
<div style="left:1155px;top:588px;width:443px;height:452px;background:#484848"></div>
<div class="t" style="left:1162px;top:594px">View</div>
<div class="t" style="left:1159px;top:615px">Filter</div>
<div class="b t" style="left:1187px;top:593px;width:180px;height:18px;line-height:15px;padding-left:4px">Shader Tree</div>
<div class="b t" style="left:1187px;top:613px;width:180px;height:18px;line-height:15px;padding-left:4px">(none)</div>
<div class="b t" style="left:1370px;top:593px;width:207px;height:18px;line-height:15px;padding-left:3px">Assign Material</div>
<div class="b t" style="left:1370px;top:613px;width:207px;height:18px;line-height:15px;padding-left:5px">Add Layer</div>
<div class="b t c" style="left:1580px;top:593px;width:16px;height:18px;line-height:15px">F</div>
<div class="b t c" style="left:1580px;top:613px;width:16px;height:18px;line-height:15px">S</div>
<svg style="left:1355px;top:599px" width="220" height="28" fill="#ccc"><path d="M0 0h8L4 5zM0 20h8L4 25zM209 20h8l-4 5z"/></svg>
<div style="left:1160px;top:635px;width:422px;height:400px;background:repeating-linear-gradient(#8e99a3 0,#8e99a3 18px,#8c97a1 18px,#8c97a1 36px);border-radius:6px 0 0 6px"></div>
<div class="hd" style="left:1160px;top:635px;width:422px;height:18px"></div>
<div class="ln" style="left:1184px;top:635px;height:400px"></div><div class="ln" style="left:1448px;top:635px;height:400px"></div>
<div class="t" style="left:1199px;top:637px;color:#b7c0c8">Name</div>
<div class="t" style="left:1451px;top:637px;color:#b7c0c8">Effect</div>
<svg style="left:1164px;top:637px" width="14" height="120"><use href="#eye" y="0" width="14" height="12"/><use href="#eye" y="36" width="14" height="12"/><use href="#eye" y="54" width="14" height="12"/><use href="#eye" y="72" width="14" height="12"/><use href="#eye" y="90" width="14" height="12"/><use href="#eye" y="108" width="14" height="12"/></svg>
<svg style="left:1188px;top:653px" width="24" height="200"><path d="M1 6h7L4.500 12zM1 150l7 4-7 4zM1 168l7 4-7 4zM13 59l7 4-7 4z" fill="#444"/><path d="M4.500 13v87h8M4.500 28h8M4.500 46h8M4.500 64h8M4.500 82h8" stroke="#555" stroke-dasharray="1 1" fill="none"/></svg>
<svg style="left:1208px;top:654px" width="30" height="220"><circle cx="8" cy="7" r="6.500" fill="url(#ps)"/><use href="#img" x="12" y="18" width="14" height="14"/><use href="#img" x="12" y="36" width="14" height="14"/><circle cx="19" cy="60" r="5" fill="url(#gs)"/><circle cx="22" cy="64" r="4.500" fill="#c0242a"/><circle cx="19" cy="79" r="6.500" fill="url(#ws)"/><circle cx="19" cy="97" r="6.500" fill="url(#gs)"/><use href="#fold" x="1" y="108" width="14" height="14"/><use href="#fold" x="1" y="126" width="14" height="14"/><use href="#clap" x="1" y="198" width="14" height="14"/></svg>
<div class="t d" style="left:1227px;top:654px">Render</div>
<div class="t d" style="left:1239px;top:672px">Alpha Output</div>
<div class="t d" style="left:1239px;top:690px">Final Color Output</div>
<div class="t d n" style="left:1239px;top:708px">Samsung_55_Inch_QLED_The_Serif_TV</div>
<div class="t m" style="left:1435px;top:708px">...</div>
<div class="t d" style="left:1239px;top:726px">Base Shader</div>
<div class="t d" style="left:1239px;top:744px">Base Material</div>
<div class="t d" style="left:1227px;top:762px">Library</div>
<div class="t d" style="left:1227px;top:780px">Nodes</div>
<div class="t d" style="left:1211px;top:798px">Lights</div>
<div class="t d" style="left:1211px;top:816px">Environments</div>
<div class="t d" style="left:1211px;top:834px">Bake Items</div>
<div class="t d" style="left:1227px;top:852px">FX</div>
<div class="t d" style="left:1451px;top:672px">Alpha</div>
<div class="t d" style="left:1450px;top:690px">Final Color</div>
<div class="t d" style="left:1450px;top:726px">Full Shading</div>
<div class="t d" style="left:1451px;top:744px">(all)</div>
<svg style="left:1571px;top:677px" width="8" height="80" fill="#111"><path d="M0 0h8L4 4zM0 18h8L4 22zM0 36h8L4 40zM0 54h8L4 58zM0 72h8L4 76z"/></svg>
<div style="left:1582px;top:635px;width:14px;height:400px;background:#5a5a5a;border-radius:0 6px 6px 0"></div>
<svg style="left:1586px;top:832px" width="6" height="6"><circle cx="3" cy="3" r="2.500" fill="#777"/></svg>

<!-- right column -->
<div style="left:1601px;top:104px;width:319px;height:936px;background:#484848"></div>
<div class="t r g" style="left:1620px;top:108px;width:89px">Pass Groups</div>
<div class="t r g" style="left:1620px;top:129px;width:89px">Passes</div>
<div class="b t g" style="left:1713px;top:106px;width:202px;height:18px;line-height:15px;padding-left:20px">(none)</div>
<div class="b t g" style="left:1713px;top:127px;width:202px;height:18px;line-height:15px;padding-left:20px">(none)</div>
<div class="dl" style="left:1835px;top:107px;height:16px"></div><div class="dl" style="left:1835px;top:128px;height:16px"></div>
<svg style="left:1822px;top:112px" width="8" height="28" fill="#888"><path d="M0 0h8L4 5zM0 21h8L4 26z"/></svg>
<div class="t c" style="left:1835px;top:108px;width:80px">New</div>
<div class="t c g" style="left:1835px;top:129px;width:80px">New</div>
<div style="left:1610px;top:150px;width:305px;height:1px;background:#666"></div>
<div class="b" style="left:1607px;top:156px;width:100px;height:23px;border-radius:8px"></div>
<svg style="left:1610px;top:159px" width="18" height="17"><circle cx="8.500" cy="8.500" r="6.500" fill="none" stroke="#8fe08f" stroke-width="1.800"/><path d="M8.500 5v7M5 8.500h7" stroke="#8fe08f" stroke-width="1.500"/></svg>
<div class="t" style="left:1630px;top:161px">Auto Add</div>
<div class="b" style="left:1711px;top:156px;width:204px;height:23px;border-radius:8px"></div>
<div class="dl" style="left:1813px;top:157px;height:21px"></div>
<svg style="left:1714px;top:159px" width="17" height="17"><circle cx="8.500" cy="8.500" r="8" fill="#3a3a3a"/><path d="M6 3h5v5h2.500l-5 6-5-6H6z" fill="#8fe08f"/></svg>
<div class="t" style="left:1734px;top:161px">Apply</div>
<svg style="left:1816px;top:159px" width="17" height="17"><circle cx="8.500" cy="8.500" r="8" fill="#3a3a3a"/><path d="M4.500 4.500l8 8M12.500 4.500l-8 8" stroke="#f06a6a" stroke-width="3"/></svg>
<div class="t" style="left:1835px;top:161px">Discard</div>
<div style="left:1601px;top:184px;width:319px;height:20px;background:#262626"></div>
<svg style="left:1604px;top:192px" width="8" height="8"><circle cx="4" cy="4" r="3.500" fill="#111"/></svg>
<div class="tab on t" style="left:1620px;top:188px;width:60px;height:16px">Properties</div>
<div class="t" style="left:1685px;top:187px;font-size:14px;color:#999">+</div>
<svg style="left:1876px;top:189px" width="44" height="14"><use href="#exp" width="13" height="13"/><use href="#gear" x="15" width="12" height="12"/><path d="M36 2l4 4-4 4z" fill="#999"/></svg>
<div style="left:1601px;top:204px;width:319px;height:1px;background:#5c5c5c"></div>
<div class="t" style="left:1609px;top:1017px">&gt;</div>
<div style="left:1625px;top:1016px;width:262px;height:17px;background:#8e98a2;border-radius:6px"></div>
<div class="t" style="left:1631px;top:1017px;color:#3d444b">Command</div>
<svg style="left:1894px;top:1015px" width="20" height="20"><circle cx="10" cy="10" r="9" fill="#3a3a3a"/><circle cx="10" cy="10" r="5.500" fill="none" stroke="#c75a5a" stroke-width="1.500"/></svg>
</body></html>
